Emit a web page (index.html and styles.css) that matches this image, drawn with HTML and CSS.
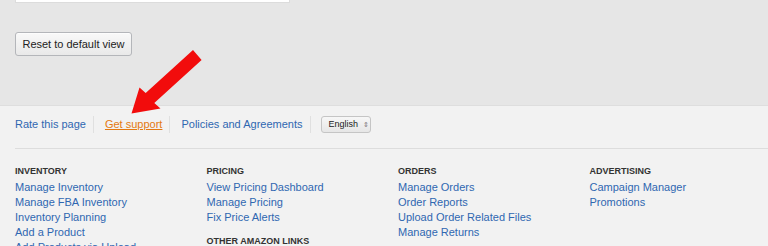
FILE: index.html
```html
<!DOCTYPE html>
<html lang="en">
<head>
    <meta charset="UTF-8">
    <title>Seller Central footer</title>
    <link rel="stylesheet" href="styles.css">
</head>
<body>
    <div class="workspace">
        <div class="panel"></div>
        <button class="reset-btn" type="button">Reset to default view</button>
    </div>

    <footer class="footer">
        <div class="footer-links">
            <a href="#" class="footer-link">Rate this page</a>
            <a href="#" class="footer-link active">Get support</a>
            <a href="#" class="footer-link">Policies and Agreements</a>
            <div class="footer-item">
                <span class="lang-select">English <span class="lang-arrows">&#8661;</span></span>
            </div>
        </div>

        <div class="footer-columns">
            <div class="footer-col">
                <h4>Inventory</h4>
                <a href="#">Manage Inventory</a>
                <a href="#">Manage FBA Inventory</a>
                <a href="#">Inventory Planning</a>
                <a href="#">Add a Product</a>
                <a href="#">Add Products via Upload</a>
            </div>
            <div class="footer-col">
                <h4>Pricing</h4>
                <a href="#">View Pricing Dashboard</a>
                <a href="#">Manage Pricing</a>
                <a href="#">Fix Price Alerts</a>
                <h4 class="spaced">Other Amazon Links</h4>
            </div>
            <div class="footer-col">
                <h4>Orders</h4>
                <a href="#">Manage Orders</a>
                <a href="#">Order Reports</a>
                <a href="#">Upload Order Related Files</a>
                <a href="#">Manage Returns</a>
            </div>
            <div class="footer-col">
                <h4>Advertising</h4>
                <a href="#">Campaign Manager</a>
                <a href="#">Promotions</a>
            </div>
        </div>
    </footer>

    <!-- red arrow pointing at "Get support" -->
    <svg class="arrow" width="768" height="246" viewBox="0 0 768 246">
        <polygon fill="#f20c0c" points="193,50.1 201.6,59.9 154.3,102.9 160.5,108.5 131.5,113.5 139.5,87.5 145.7,93.1"/>
    </svg>
</body>
</html>
```

FILE: styles.css
```css
body {
    margin: 0;
    font-family: "Liberation Sans", Arial, sans-serif;
    background-color: #f2f2f2;
    overflow: hidden;
}
.workspace {
    background-color: #e6e6e6;
    height: 105px;
    padding: 0 15px;
    border-bottom: 1px solid #dedede;
}
.panel {
    width: 275px;
    height: 3px;
    background-color: #ffffff;
    border: 1px solid #dcdcdc;
    border-top: none;
    box-sizing: border-box;
}
.reset-btn {
    margin-top: 29px;
    width: 117px;
    height: 24px;
    padding: 0;
    font-family: "Liberation Sans", Arial, sans-serif;
    font-size: 11px;
    color: #222;
    background: linear-gradient(#f9f9f9, #e9e9e9);
    border: 1px solid #b4b6ba;
    border-radius: 3px;
    box-shadow: 0 1px 0 rgba(255, 255, 255, 0.6) inset;
}
.footer {
    padding-left: 15px;
}
.footer-links {
    display: flex;
    align-items: flex-start;
    height: 32px;
    padding-top: 10px;
    border-bottom: 1px solid #dddddd;
}
.footer-link, .footer-item {
    font-size: 11px;
    color: #2f67b1;
    text-decoration: none;
    padding: 0 7px 0 11px;
    border-left: 1px solid #e0e0e0;
    line-height: 17px;
}
.footer-link:first-child {
    padding-left: 0;
    border-left: none;
}
.footer-link.active {
    color: #e47911;
    text-decoration: underline;
}
.footer-item {
    padding-left: 10px;
}
.lang-select {
    display: inline-block;
    vertical-align: top;
    width: 50px;
    height: 17px;
    box-sizing: border-box;
    padding-left: 7px;
    font-size: 9px;
    line-height: 15px;
    color: #222;
    background: linear-gradient(#f7f7f7, #e6e6e6);
    border: 1px solid #c5c5c5;
    border-radius: 3px;
}
.lang-arrows {
    font-size: 7px;
    color: #777;
    margin-left: 2px;
}
.footer-columns {
    display: grid;
    grid-template-columns: repeat(4, 191.5px);
    padding-top: 16px;
}
.footer-col {
    display: flex;
    flex-direction: column;
}
.footer-col h4 {
    margin: 0 0 3px;
    font-size: 9px;
    line-height: 12px;
    font-weight: bold;
    text-transform: uppercase;
    color: #333;
}
.footer-col h4.spaced {
    margin-top: 10px;
}
.footer-col a {
    font-size: 11px;
    line-height: 15px;
    color: #2f67b1;
    text-decoration: none;
}
.arrow {
    position: absolute;
    left: 0;
    top: 0;
    pointer-events: none;
}
```
